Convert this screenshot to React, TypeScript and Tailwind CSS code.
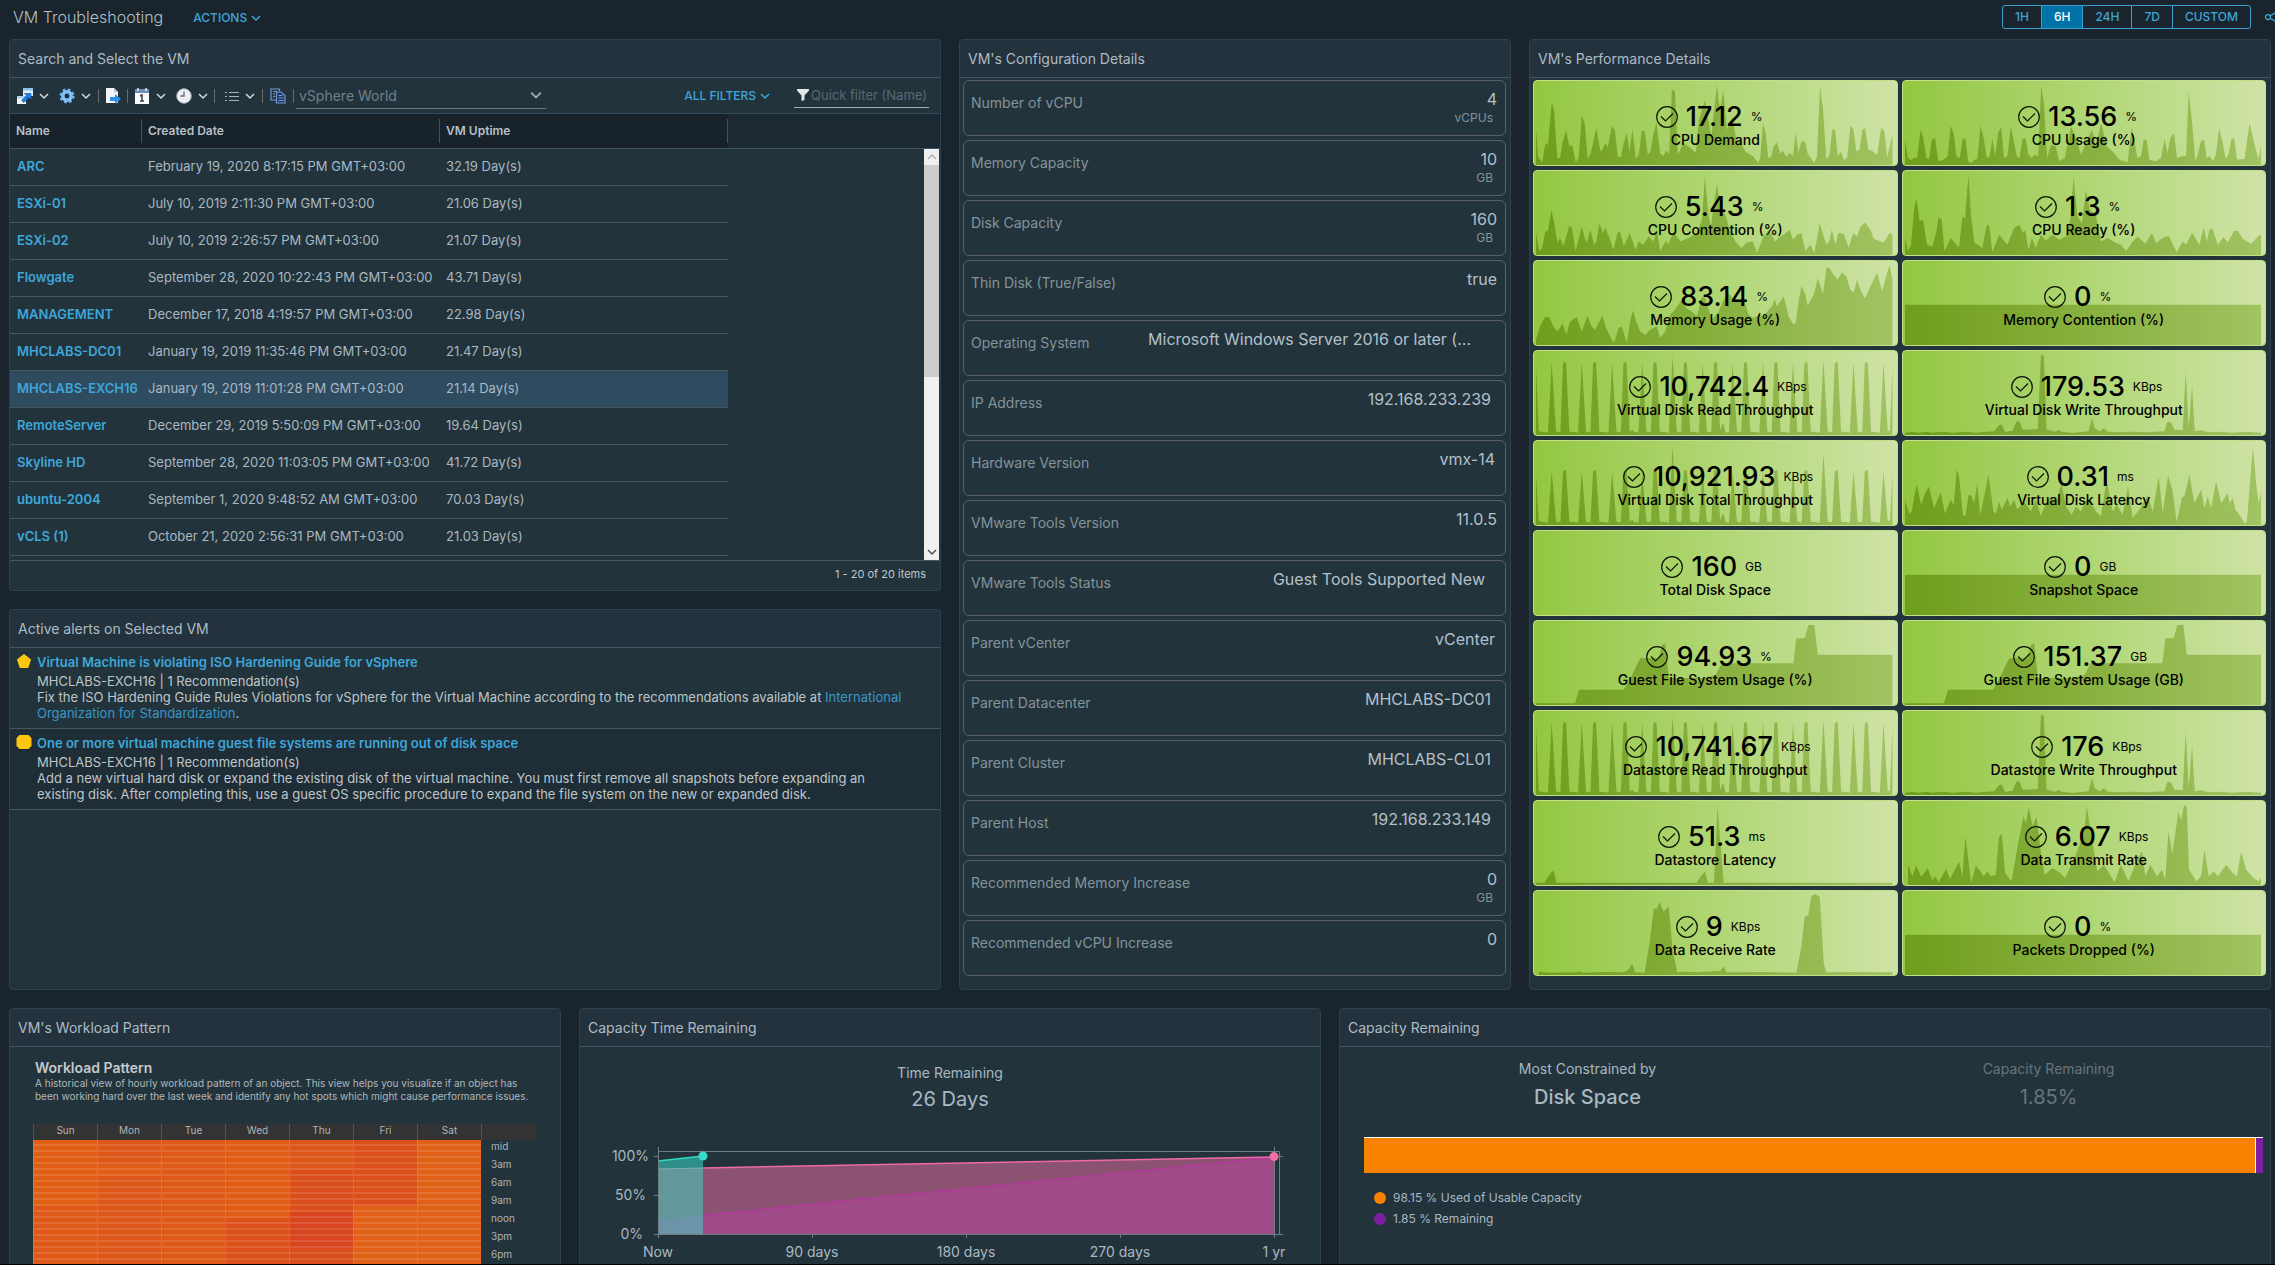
import React from 'react';
import { Share2 } from 'lucide-react';

/* ---------- shared pieces ---------- */

function Chevron({ className = 'size-2.5 text-[#d5dbe0]' }: { className?: string }) {
  return (
    <svg viewBox="0 0 10 10" className={`shrink-0 ${className}`} fill="none" stroke="currentColor" strokeWidth="1.5">
      <path d="M1 3l4 4 4-4" />
    </svg>
  );
}

function Panel({ title, className = '', children }: { title: string; className?: string; children: React.ReactNode }) {
  return (
    <section className={`flex flex-col overflow-hidden rounded border border-[#2f4252] bg-[#22333b] ${className}`}>
      <h2 className="h-[38px] shrink-0 border-b border-[#435664] bg-[#23323c] px-2 pt-px text-[14px] leading-[36px] text-[#adbbc6]">{title}</h2>
      {children}
    </section>
  );
}

/* ---------- toolbar icons ---------- */

const OpenIcon = () => (
  <svg viewBox="0 0 16 16" className="size-4">
    <rect x="6" y="0" width="10" height="8" fill="#dfeefb" />
    <rect x="6" y="0" width="10" height="2.5" fill="#8fc0ee" />
    <rect x="0" y="8" width="9" height="8" fill="#f2f8fe" />
    <rect x="0" y="8" width="9" height="2.5" fill="#a8cdf2" />
    <path d="M4.5 12.5l5-5-2-2H14v6l-2-2-5 5z" fill="#1f7fe0" stroke="#0f4f9e" strokeWidth=".6" />
  </svg>
);
const GearIcon = () => (
  <svg viewBox="0 0 16 16" className="size-4">
    <circle cx="8" cy="8" r="6.3" fill="none" stroke="#6db4f5" strokeWidth="2.6" strokeDasharray="2.6 2.35" />
    <circle cx="8" cy="8" r="4.2" fill="none" stroke="#7fc0fa" strokeWidth="3.6" />
    <circle cx="8" cy="8" r="2.3" fill="#22333b" />
  </svg>
);
const ExportIcon = () => (
  <svg viewBox="0 0 16 16" className="size-4">
    <path d="M1 0h8l4 4v11H1z" fill="#f1f5f8" />
    <path d="M9 0l4 4H9z" fill="#b9c6d2" />
    <path d="M5 9h5V6l6 5-6 5v-3H5z" fill="#2d8eea" />
  </svg>
);
const CalendarIcon = () => (
  <svg viewBox="0 0 16 16" className="size-4">
    <rect x="1" y="1" width="14" height="15" fill="#fbfcfd" />
    <rect x="1" y="1" width="14" height="4" fill="#6e8fb8" />
    <path d="M4 0v3M12 0v3" stroke="#dfe8f2" strokeWidth="1.5" />
    <path d="M6 8l2-1v6M6 13h4" fill="none" stroke="#39424c" strokeWidth="1.5" />
  </svg>
);
const ClockIcon = () => (
  <svg viewBox="0 0 16 16" className="size-4">
    <circle cx="8" cy="8" r="7.2" fill="#eef0f2" stroke="#b8c4d0" />
    <path d="M8 3.5V8H4.5" fill="none" stroke="#5e6b78" strokeWidth="1.3" />
  </svg>
);
const ListIcon = () => (
  <svg viewBox="0 0 14 14" className="size-3.5" stroke="#a9b0b5" strokeWidth="1.1">
    <path d="M4 3.5h10M4 7.5h10M4 11.5h10M0 3.5h2M0 7.5h2M0 11.5h2" />
  </svg>
);
const CopyIcon = () => (
  <svg viewBox="0 0 16 16" className="size-4" fill="none" stroke="#6f97dd" strokeWidth="1.2">
    <path d="M9.5 12H1V1h8.5v2" />
    <path d="M6.5 4H11l4 3.5V15H6.5z" fill="#23395a" />
    <path d="M3 3.5h4M3 6h2M3 8.500h2M8.500 7.500h4M8.500 10h5M8.500 12.500h5" />
  </svg>
);

const Divider = () => <span className="h-3.5 w-px bg-[#6a6a6a]" />;

function IconButton({ label, menu, children }: { label: string; menu?: boolean; children: React.ReactNode }) {
  return (
    <button type="button" aria-label={label} className="flex items-center gap-1.5">
      {children}
      {menu && <Chevron />}
    </button>
  );
}

/* ---------- VM list ---------- */

const vms: [string, string, string][] = [
  ['ARC', 'February 19, 2020 8:17:15 PM GMT+03:00', '32.19 Day(s)'],
  ['ESXi-01', 'July 10, 2019 2:11:30 PM GMT+03:00', '21.06 Day(s)'],
  ['ESXi-02', 'July 10, 2019 2:26:57 PM GMT+03:00', '21.07 Day(s)'],
  ['Flowgate', 'September 28, 2020 10:22:43 PM GMT+03:00', '43.71 Day(s)'],
  ['MANAGEMENT', 'December 17, 2018 4:19:57 PM GMT+03:00', '22.98 Day(s)'],
  ['MHCLABS-DC01', 'January 19, 2019 11:35:46 PM GMT+03:00', '21.47 Day(s)'],
  ['MHCLABS-EXCH16', 'January 19, 2019 11:01:28 PM GMT+03:00', '21.14 Day(s)'],
  ['RemoteServer', 'December 29, 2019 5:50:09 PM GMT+03:00', '19.64 Day(s)'],
  ['Skyline HD', 'September 28, 2020 11:03:05 PM GMT+03:00', '41.72 Day(s)'],
  ['ubuntu-2004', 'September 1, 2020 9:48:52 AM GMT+03:00', '70.03 Day(s)'],
  ['vCLS (1)', 'October 21, 2020 2:56:31 PM GMT+03:00', '21.03 Day(s)'],
];

function VmSearch() {
  return (
    <Panel title="Search and Select the VM">
      <div className="flex h-9 items-center border-b border-[#33485a] pl-[7px] pr-[11px]">
        <div className="flex items-center gap-2.5">
          <IconButton label="Open in" menu><OpenIcon /></IconButton>
          <IconButton label="Settings" menu><GearIcon /></IconButton>
        </div>
        <div className="ml-[7px] flex items-center gap-1.5">
          <Divider />
          <IconButton label="Export"><ExportIcon /></IconButton>
          <Divider />
          <div className="flex items-center gap-2.5">
            <IconButton label="Date range" menu><CalendarIcon /></IconButton>
            <IconButton label="Time" menu><ClockIcon /></IconButton>
          </div>
          <Divider />
        </div>
        <div className="ml-2.5 flex items-center gap-[7px]">
          <IconButton label="List" menu><ListIcon /></IconButton>
          <Divider />
          <IconButton label="Copy"><CopyIcon /></IconButton>
          <Divider />
        </div>
        <div className="relative ml-0.5 w-[250px] border-b border-[#6b7a82]">
          <select aria-label="Scope" className="h-6 w-full appearance-none bg-transparent pl-[3px] text-[14px] leading-6 text-[#70808a] outline-none">
            <option>vSphere World</option>
          </select>
          <Chevron className="pointer-events-none absolute right-1 top-1.5 size-3 text-[#a3adb3]" />
        </div>
        <button type="button" className="ml-auto flex items-center gap-1 text-[12px] font-medium text-[#3ea6d8]">
          ALL FILTERS <Chevron className="size-2.5 text-[#3ea6d8]" />
        </button>
        <label className="ml-6 flex w-[135px] items-center gap-0.5 border-b border-[#a3adb3] pl-[3px]">
          <svg viewBox="0 0 12 12" className="size-3 shrink-0" fill="#e2e6e8"><path d="M0 0h12v1.500L7.500 6.500V11L4.500 12V6.500L0 1.500z" /></svg>
          <input aria-label="Quick filter (Name)" placeholder="Quick filter (Name)" className="h-6 w-full min-w-0 bg-transparent text-[13px] outline-none placeholder:text-[#586972]" />
        </label>
      </div>
      <div className="relative h-[446px] overflow-hidden">
        <table className="w-full table-fixed border-separate border-spacing-0 text-left text-[13px] text-[#a9b8c2]">
          <colgroup>
            <col className="w-[132px]" />
            <col className="w-[298px]" />
            <col className="w-[288px]" />
            <col />
          </colgroup>
          <thead>
            <tr className="h-[35px] bg-[#18222a] text-[12px] text-[#b5c0c8]">
              {['Name', 'Created Date', 'VM Uptime'].map((h) => (
                <th key={h} scope="col" className="border-b border-[#3f525f] p-0 font-semibold">
                  <div className="h-6 border-r border-[#3f525f] pl-1.5 leading-6">{h}</div>
                </th>
              ))}
              <td className="border-b border-[#3f525f] bg-[#1d2932]" />
            </tr>
          </thead>
          <tbody>
            {vms.map(([name, created, uptime]) => (
              <tr key={name} className={name === 'MHCLABS-EXCH16' ? 'h-[37px] bg-[#2f4b5f]' : 'h-[37px]'}>
                <td className="border-b border-[#46575f] p-0 pl-[7px] font-semibold">
                  <a href="#vm" className="text-[#3ea6d8]">{name}</a>
                </td>
                <td className="whitespace-nowrap border-b border-[#46575f] p-0 pl-1.5">{created}</td>
                <td className="border-b border-[#46575f] p-0 pl-1.5">{uptime}</td>
                <td className="bg-[#22333b] p-0" />
              </tr>
            ))}
          </tbody>
        </table>
        <div className="absolute bottom-0 right-px top-[35px] flex w-[15px] flex-col items-center bg-[#f0f0f0]">
          <Chevron className="my-[3px] size-2.5 rotate-180 text-[#b0b0b0]" />
          <div className="h-[212px] w-full bg-[#cdcdcd]" />
          <Chevron className="mb-[3px] mt-auto size-2.5 text-[#505050]" />
        </div>
      </div>
      <div className="h-[30px] border-t border-[#46575f] pr-3.5 text-right text-[11px] leading-[26px] text-[#c0c9cf]">1 - 20 of 20 items</div>
    </Panel>
  );
}

/* ---------- alerts ---------- */

function Alert({ title, icon, className = '', children }: { title: string; icon: React.ReactNode; className?: string; children: React.ReactNode }) {
  return (
    <article className={`flex gap-[5px] border-b border-[#46575f] pb-[7px] pl-1.5 pr-5 pt-[5px] text-[13px] leading-4 text-[#bec6ca] ${className}`}>
      <svg viewBox="0 0 16 16" className="size-4 shrink-0">{icon}</svg>
      <div>
        <h3 className="mb-0.5 font-semibold leading-[18px]"><a href="#alert" className="text-[#3ea6d8]">{title}</a></h3>
        <p>MHCLABS-EXCH16 | 1 Recommendation(s)</p>
        <p className="pr-2">{children}</p>
      </div>
    </article>
  );
}

function Alerts() {
  return (
    <Panel title="Active alerts on Selected VM" className="grow">
      <Alert
        title="Virtual Machine is violating ISO Hardening Guide for vSphere"
        icon={<path d="M8 1.500l6.500 5L12 14.500H4L1.500 6.500z" fill="#fdc70f" stroke="#fdc70f" strokeLinejoin="round" />}
      >
        Fix the ISO Hardening Guide Rules Violations for vSphere for the Virtual Machine according to the recommendations available at{' '}
        <a href="#iso" className="text-[#3a97c9]">International Organization for Standardization</a>.
      </Alert>
      <Alert
        title="One or more virtual machine guest file systems are running out of disk space"
        icon={<path d="M3.500 1h9L15.500 4v8l-3 3h-9l-3-3V4z" fill="#fdc70f" />}
        className="bg-[#1f2d36]"
      >
        Add a new virtual hard disk or expand the existing disk of the virtual machine. You must first remove all snapshots before expanding an
        existing disk. After completing this, use a guest OS specific procedure to expand the file system on the new or expanded disk.
      </Alert>
    </Panel>
  );
}

/* ---------- configuration ---------- */

const config: { label: string; value: string; unit?: string; pad?: string }[] = [
  { label: 'Number of vCPU', value: '4', unit: 'vCPUs' },
  { label: 'Memory Capacity', value: '10', unit: 'GB' },
  { label: 'Disk Capacity', value: '160', unit: 'GB' },
  { label: 'Thin Disk (True/False)', value: 'true' },
  { label: 'Operating System', value: 'Microsoft Windows Server 2016 or later (...', pad: 'pr-[34px]' },
  { label: 'IP Address', value: '192.168.233.239', pad: 'pr-3.5' },
  { label: 'Hardware Version', value: 'vmx-14', pad: 'pr-2.5' },
  { label: 'VMware Tools Version', value: '11.0.5' },
  { label: 'VMware Tools Status', value: 'Guest Tools Supported New', pad: 'pr-5' },
  { label: 'Parent vCenter', value: 'vCenter', pad: 'pr-2.5' },
  { label: 'Parent Datacenter', value: 'MHCLABS-DC01', pad: 'pr-3.5' },
  { label: 'Parent Cluster', value: 'MHCLABS-CL01', pad: 'pr-3.5' },
  { label: 'Parent Host', value: '192.168.233.149', pad: 'pr-3.5' },
  { label: 'Recommended Memory Increase', value: '0', unit: 'GB' },
  { label: 'Recommended vCPU Increase', value: '0' },
];

function Configuration() {
  return (
    <Panel title="VM's Configuration Details" className="col-span-3">
      <dl className="flex flex-col gap-1 pb-[13px] pl-[3px] pr-1 pt-0.5">
        {config.map(({ label, value, unit, pad = 'pr-2' }) => (
          <div key={label} className="flex h-14 justify-between rounded-md border border-[#5b5f62] pl-[7px]">
            <dt className="pt-3 text-[14px] leading-5 text-[#83939c]">{label}</dt>
            <dd className={`pt-2 text-right text-[16px] leading-5 text-[#b3c0ca] ${pad}`}>
              {value}
              {unit && <span className="block pr-1 text-[12px] leading-[18px] text-[#83939c]">{unit}</span>}
            </dd>
          </div>
        ))}
      </dl>
    </Panel>
  );
}

/* ---------- performance tiles ---------- */

const BASE = 256;

/* Evenly spaced throughput bursts: a narrow spike followed by a flat-topped one. */
function bursts(narrow: number, wide: number, tall: Record<number, number>) {
  const pts: string[] = [`18,${narrow + 8}`, '26,245'];
  for (let i = 0; i < 12; i++) {
    const x = Math.round(65 + i * 90.4);
    const top = tall[i] ?? narrow;
    pts.push(`${x - 24},247`, `${x - 11},249`, `${x},${top}`, `${x + 13},246`);
    if (i < 11) pts.push(`${x + 26},248`, `${x + 34},${wide + 3}`, `${x + 43},${wide}`, `${x + 53},246`);
    if (i === 2) pts.push('307,240');
    if (i === 5) pts.push('568,246', '578,218', '586,246');
  }
  pts.push('1078,240', `1086,${narrow + 8}`);
  return pts.join(' ');
}

const flat = '18,135 1086,135';
const diskRead = bursts(38, 36, { 4: 18, 9: 28 });
const diskTotal = bursts(95, 90, { 4: 18, 9: 40 });
const diskWrite =
  '18,250 40,246 60,249 80,246 100,249 130,246 160,249 200,246 230,249 260,246 285,245 300,226 308,225 318,247 340,243 352,215 362,216 370,240 416,238 425,15 434,17 442,240 470,246 478,240 486,246 520,249 568,245 578,205 586,235 600,245 614,236 625,246 660,248 700,246 740,248 795,245 804,216 814,217 825,240 850,242 859,65 868,235 878,108 886,245 905,242 925,248 960,246 1000,249 1040,246 1086,249';
const guestFs =
  '18,251 135,251 147,210 281,210 299,180 330,115 385,115 396,75 405,70 416,175 520,175 556,165 575,130 789,130 798,55 823,55 834,15 852,15 862,105 1086,105';

const metrics: { value: string; unit: string; label: string; points: string }[] = [
  { value: '17.12', unit: '%', label: 'CPU Demand', points: '18,145 24,230 36,250 46,192 54,195 65,68 72,90 82,235 90,234 98,185 108,152 118,200 126,195 137,248 146,235 155,108 164,130 173,238 182,220 199,145 211,215 220,205 226,188 233,204 245,140 254,150 263,230 272,233 281,190 290,158 298,215 307,148 317,238 326,225 335,152 344,155 353,225 361,215 370,160 379,128 390,222 400,228 408,212 417,222 425,30 434,32 443,225 460,190 480,205 497,218 506,120 524,62 533,110 543,170 560,15 569,90 579,32 590,150 606,110 618,180 630,185 645,215 660,225 668,230 684,250 690,235 698,130 706,160 714,235 722,232 730,200 740,188 750,222 758,212 768,232 778,218 788,230 796,158 804,218 813,185 824,186 832,222 852,250 860,230 869,18 878,90 888,240 897,225 906,148 914,150 922,228 931,215 940,240 950,235 960,138 969,150 978,215 987,210 996,148 1004,146 1014,210 1024,212 1040,226 1052,142 1062,155 1070,232 1086,165' },
  { value: '13.56', unit: '%', label: 'CPU Usage (%)', points: '18,180 27,235 36,242 45,234 54,235 65,150 73,175 82,236 90,238 98,180 108,175 118,245 130,242 146,230 155,138 164,160 172,230 182,236 190,180 199,175 207,245 217,250 226,240 235,238 244,138 254,175 262,230 270,235 280,178 288,230 297,158 306,142 315,235 325,228 335,140 344,185 353,230 361,235 370,178 379,175 388,225 397,235 407,225 417,230 426,18 434,70 444,235 455,195 470,200 480,245 497,235 515,140 533,180 545,225 560,190 578,150 590,195 606,130 622,200 640,215 660,240 685,248 697,142 705,180 714,236 725,228 733,180 742,180 750,240 770,245 785,235 796,178 804,220 813,175 824,160 833,235 850,228 860,230 868,32 880,150 888,245 896,220 904,185 914,180 922,235 930,230 942,245 950,220 959,145 970,190 978,236 987,225 996,178 1004,175 1013,240 1035,238 1050,130 1062,180 1076,238 1080,225 1086,185' },
  { value: '5.43', unit: '%', label: 'CPU Contention (%)', points: '18,190 28,245 36,235 46,185 54,182 64,120 74,165 82,220 90,205 100,230 118,168 126,175 137,245 155,170 164,205 170,220 181,180 192,225 199,215 208,160 218,190 226,175 240,210 250,240 262,190 270,185 281,230 299,190 316,240 326,215 340,225 355,200 370,215 380,180 390,245 408,212 414,225 430,185 450,215 475,205 500,190 515,150 524,20 534,130 542,170 560,42 570,110 585,135 600,185 615,215 633,235 650,218 668,215 680,250 700,200 716,180 735,215 745,205 760,195 778,180 788,210 800,195 813,190 825,245 840,225 852,250 868,160 880,200 888,225 897,215 904,180 915,225 924,190 940,192 955,235 968,190 980,200 990,170 1004,158 1020,180 1030,208 1060,218 1078,188 1086,195' },
  { value: '1.3', unit: '%', label: 'CPU Ready (%)', points: '18,205 27,245 36,225 46,110 53,88 62,155 72,148 84,225 100,230 112,185 118,142 128,150 136,245 155,205 172,225 180,232 190,140 198,145 208,15 216,140 226,220 236,225 250,235 262,168 270,165 280,248 300,195 325,225 345,175 360,165 372,190 378,180 388,240 398,205 410,235 425,195 440,212 460,195 480,210 500,200 513,150 523,20 535,140 548,160 560,60 572,120 590,135 605,215 625,205 650,220 665,225 680,245 700,215 715,200 738,222 758,190 770,220 790,205 808,198 832,248 850,215 860,225 878,188 900,225 913,172 922,215 930,180 940,178 955,225 972,202 985,218 1003,185 1015,182 1030,208 1055,222 1080,195 1086,196' },
  { value: '83.14', unit: '%', label: 'Memory Usage (%)', points: '18,240 30,200 45,172 58,172 70,200 82,215 98,192 109,225 120,185 140,172 155,215 172,168 185,200 195,210 217,168 228,205 240,230 250,248 255,240 265,205 275,200 290,250 300,185 308,152 320,190 330,215 345,225 360,210 380,200 390,235 405,215 420,165 432,152 445,135 455,118 468,145 485,155 500,170 515,110 525,115 545,180 565,155 580,120 595,100 610,120 625,125 640,112 655,165 670,175 685,165 700,170 715,150 725,140 733,118 740,140 760,110 775,170 790,196 797,185 805,120 814,78 825,105 832,138 850,105 862,55 878,102 888,25 895,22 910,45 922,58 935,38 948,50 960,90 970,98 980,60 990,90 1003,116 1020,80 1040,38 1055,95 1065,55 1077,15 1086,60' },
  { value: '0', unit: '%', label: 'Memory Contention (%)', points: flat },
  { value: '10,742.4', unit: 'KBps', label: 'Virtual Disk Read Throughput', points: diskRead },
  { value: '179.53', unit: 'KBps', label: 'Virtual Disk Write Throughput', points: diskWrite },
  { value: '10,921.93', unit: 'KBps', label: 'Virtual Disk Total Throughput', points: diskTotal },
  { value: '0.31', unit: 'ms', label: 'Virtual Disk Latency', points: '18,180 30,222 38,215 53,132 66,195 78,160 90,140 105,205 125,158 138,222 155,180 164,195 173,88 180,110 192,230 200,225 208,165 217,168 225,190 235,130 243,228 255,170 268,105 283,215 290,222 300,185 308,210 325,175 333,200 345,180 355,210 375,185 395,215 410,180 425,230 440,190 455,170 470,190 487,130 500,200 517,225 530,200 545,215 560,180 575,190 590,215 605,230 622,120 640,215 652,195 670,225 686,140 700,235 720,210 745,165 760,215 778,110 790,220 806,108 820,155 832,248 848,172 855,170 870,105 885,190 905,150 915,205 925,170 935,205 950,125 965,190 985,160 990,190 1000,175 1008,210 1020,225 1035,250 1042,248 1060,20 1072,150 1078,190 1086,150' },
  { value: '160', unit: 'GB', label: 'Total Disk Space', points: '' },
  { value: '0', unit: 'GB', label: 'Snapshot Space', points: flat },
  { value: '94.93', unit: '%', label: 'Guest File System Usage (%)', points: guestFs },
  { value: '151.37', unit: 'GB', label: 'Guest File System Usage (GB)', points: guestFs },
  { value: '10,741.67', unit: 'KBps', label: 'Datastore Read Throughput', points: diskRead },
  { value: '176', unit: 'KBps', label: 'Datastore Write Throughput', points: diskWrite },
  { value: '51.3', unit: 'ms', label: 'Datastore Latency', points: '18,249 43,249 62,220 70,212 80,249 499,249 512,228 525,215 533,249 551,249 562,20 571,140 580,249 1086,249' },
  { value: '6.07', unit: 'KBps', label: 'Data Transmit Rate', points: '27,195 40,230 52,198 67,232 86,205 100,242 109,230 119,248 141,208 153,238 180,185 190,230 199,110 216,250 230,198 245,215 253,230 265,215 275,230 290,225 299,112 308,102 318,220 337,245 357,130 373,50 380,70 389,22 400,80 412,50 424,150 436,225 460,205 483,220 498,235 528,170 554,100 563,20 575,100 594,215 614,195 646,248 664,195 688,245 713,180 728,155 738,230 753,195 773,230 788,210 798,240 807,95 819,160 837,35 845,60 854,15 862,20 869,210 891,245 905,230 915,150 928,230 943,215 955,230 980,195 1000,220 1012,230 1025,155 1040,210 1062,235 1077,245 1086,230' },
  { value: '9', unit: 'KBps', label: 'Data Receive Rate', points: '27,247 60,249 140,248 150,246 160,249 230,247 280,248 293,242 306,222 315,248 343,249 358,160 371,55 379,58 388,37 400,65 416,50 427,180 441,248 460,246 500,248 571,243 580,230 588,248 700,247 798,249 813,170 823,80 834,75 842,20 852,12 868,20 880,220 887,248 960,247 1086,248' },
  { value: '0', unit: '%', label: 'Packets Dropped (%)', points: flat },
];

function MetricTile({ value, unit, label, points }: { value: string; unit: string; label: string; points: string }) {
  const first = points.split(',')[0];
  return (
    <div className="relative h-[86px] overflow-hidden rounded-sm border border-[#c3df88] bg-linear-to-r from-[#93c73f] via-[#afd673] to-[#d0e3a6] pt-[21px] text-black">
      {points && (
        <svg viewBox={`18 3 1068 ${BASE - 3}`} preserveAspectRatio="none" className="absolute bottom-0 left-0.5 h-[84px] w-[calc(100%-6px)]" aria-hidden="true">
          <defs>
            <linearGradient id="area" gradientUnits="userSpaceOnUse" x1="18" y1="0" x2="1086" y2="0">
              <stop offset="0" stopColor="#6e9e1c" />
              <stop offset=".5" stopColor="#87b03e" />
              <stop offset="1" stopColor="#a1c362" />
            </linearGradient>
          </defs>
          <polygon points={`${first},${BASE} ${points} 1086,${BASE}`} fill="url(#area)" />
        </svg>
      )}
      <div className="relative flex h-[30px] items-center justify-center gap-2">
        <svg viewBox="0 0 22 22" className="size-[22px]" fill="none" stroke="#101608" strokeWidth="1.2">
          <circle cx="11" cy="11" r="10.300" />
          <path d="M5 10.500l4.500 4.500L17 7.500" />
        </svg>
        <span className="text-[27px] font-medium leading-[30px]">{value}</span>
        <span className="w-6 whitespace-nowrap text-[12px]">{unit}</span>
      </div>
      <div className="relative text-center text-[14px] font-medium leading-4">{label}</div>
    </div>
  );
}

function Performance() {
  return (
    <Panel title="VM's Performance Details" className="col-span-4">
      <div className="grid grid-cols-2 gap-1 pb-[13px] pl-[3px] pr-1 pt-0.5">
        {metrics.map((m) => <MetricTile key={m.label} {...m} />)}
      </div>
    </Panel>
  );
}

/* ---------- workload pattern ---------- */

const days = ['Sun', 'Mon', 'Tue', 'Wed', 'Thu', 'Fri', 'Sat'];
const hours = ['mid', '3am', '6am', '9am', 'noon', '3pm', '6pm'];

function heat(day: string, hour: number) {
  if (day === 'Thu') return hour >= 12 && hour < 18 ? 'bg-[#d8441e]' : hour < 5 ? 'bg-[#dc561a]' : 'bg-[#db4e1b]';
  if (day === 'Fri') return hour < 11 ? 'bg-[#db4f1b]' : 'bg-[#e06017]';
  if (day === 'Wed') return hour < 13 ? 'bg-[#df5c17]' : 'bg-[#dc5019]';
  if (day === 'Mon') return hour >= 4 && hour < 6 ? 'bg-[#e05e15]' : 'bg-[#dd5719]';
  if (day === 'Sat') return 'bg-[#df6016]';
  if (day === 'Sun') return hour < 11 ? 'bg-[#e05f15]' : 'bg-[#de5818]';
  return 'bg-[#de5917]';
}

function Workload() {
  return (
    <Panel title="VM's Workload Pattern" className="col-span-3">
      <div className="px-[23px] pb-5 pt-3">
        <h3 className="pl-0.5 text-[14px] font-semibold leading-[18px] text-[#c3c9cc]">Workload Pattern</h3>
        <p className="pl-0.5 text-[10px] leading-[13px] text-[#b0b8bc]">
          A historical view of hourly workload pattern of an object. This view helps you visualize if an object has
          <br />
          been working hard over the last week and identify any hot spots which might cause performance issues.
        </p>
        <table className="mt-[21px] w-full table-fixed border-separate border-spacing-0 text-[10px] text-[#b0b4b6]">
          <thead>
            <tr className="h-4 bg-[#333333]">
              {days.map((d) => <th key={d} scope="col" className="border-l border-[#4b5457] p-0 pb-1 font-normal leading-3">{d}</th>)}
              <td className="w-14 border-l border-[#4b5457] p-0" />
            </tr>
          </thead>
          <tbody>
            {Array.from({ length: hours.length * 3 }, (_, hour) => (
              <tr key={hour} className="h-1.5">
                {days.map((d) => <td key={d} className={`border-b-2 border-l border-b-white/12 border-l-white/15 p-0 ${heat(d, hour)}`} />)}
                {hour % 3 === 0 && <th scope="row" rowSpan={3} className="h-[18px] p-0 pl-2.5 text-left align-top font-normal leading-3">{hours[hour / 3]}</th>}
              </tr>
            ))}
          </tbody>
        </table>
      </div>
    </Panel>
  );
}

/* ---------- capacity ---------- */

function TimeRemaining() {
  return (
    <Panel title="Capacity Time Remaining" className="col-span-4">
      <div className="pt-4 text-center text-[#a9b8c2]">
        <div className="text-[14px] leading-5">Time Remaining</div>
        <div className="mt-0.5 text-[20px] leading-7">26 Days</div>
      </div>
      <svg viewBox="0 0 740 125" className="mt-[27px] w-full" fontSize="14" fill="#a9b8c2" role="img" aria-label="Projected capacity over one year">
        <polygon points="78,29 694,17 694,94 78,94" fill="#8b5272" />
        <polygon points="78,80 694,17 694,94 78,94" fill="#a04a88" />
        <path d="M78 80L694 17" stroke="#b03a9a" strokeWidth="1.500" />
        <polygon points="78,21 123,16 123,94 78,94" fill="#2f8f88" />
        <polygon points="78,29 123,28 123,94 78,94" fill="#62989b" />
        <polygon points="78,80 123,75 123,94 78,94" fill="#6c94a9" />
        <path d="M78 29L123 28" stroke="#7fb0b0" />
        <path d="M123 28L694 17" stroke="#f06aa6" strokeWidth="1.500" />
        <path d="M78 21L123 16" stroke="#2fd9c4" strokeWidth="1.500" />
        <path d="M78.500 7V98M74 94.500H703M74 16.500H78M74 55.500H78M78 11.500H699.500V94M694.500 7V98M694 16.500H703M232.500 94V98M386.500 94V98M540.500 94V98" fill="none" stroke="#6f7d84" />
        <circle cx="123" cy="16" r="4.500" fill="#35dcca" />
        <circle cx="694" cy="16.500" r="4.500" fill="#f26fa4" />
        <g textAnchor="end">
          <text x="69" y="21">100%</text>
          <text x="66" y="60">50%</text>
          <text x="63" y="99">0%</text>
        </g>
        <g textAnchor="middle">
          <text x="78" y="117">Now</text>
          <text x="232" y="117">90 days</text>
          <text x="386" y="117">180 days</text>
          <text x="540" y="117">270 days</text>
          <text x="694" y="117">1 yr</text>
        </g>
      </svg>
    </Panel>
  );
}

function CapacityRemaining() {
  return (
    <Panel title="Capacity Remaining" className="col-span-5">
      <div className="grid grid-cols-2 pl-5 pt-3 text-center">
        <div className="text-[#a9b8c2]">
          <div className="text-[14px] leading-5">Most Constrained by</div>
          <div className="mt-1 text-[20px] font-medium leading-7">Disk Space</div>
        </div>
        <div className="pl-3 text-[#69757b]">
          <div className="text-[14px] leading-5">Capacity Remaining</div>
          <div className="mt-1 text-[20px] leading-7">1.85%</div>
        </div>
      </div>
      <div className="ml-6 mr-[7px] mt-[26px] flex h-9 border-t border-white">
        <div className="grow bg-[#f98300]" />
        <div className="w-2 border-l border-white bg-[#7a1fa0]" />
      </div>
      <ul className="ml-[34px] mt-3.5 text-[12px] leading-[21px] text-[#a9b8c2]">
        <li className="flex items-center gap-[7px]"><span className="size-3 rounded-full bg-[#fa8200]" />98.15 % Used of Usable Capacity</li>
        <li className="flex items-center gap-[7px]"><span className="size-3 rounded-full bg-[#7a1fa0]" />1.85 % Remaining</li>
      </ul>
    </Panel>
  );
}

/* ---------- page ---------- */

const ranges = ['1H', '6H', '24H', '7D', 'CUSTOM'];

export default function App() {
  return (
    <main className="h-screen overflow-hidden border-b border-black bg-[#19242c] pl-[9px] pr-1 font-['Inter',sans-serif]">
      <header className="-mr-1 flex h-[39px] items-start overflow-hidden pl-1">
        <h1 className="pt-1.5 text-[16px] font-light leading-[22px] text-[#b4c0c8]">VM Troubleshooting</h1>
        <button type="button" className="ml-[30px] mt-2 flex items-center gap-1 text-[12px] font-medium leading-5 text-[#3ea6d8]">
          ACTIONS <Chevron className="size-2.5 text-[#3ea6d8]" />
        </button>
        <div className="ml-auto mt-[5px] flex h-6 shrink-0 divide-x divide-[#3a9fcc] overflow-hidden rounded-[3px] border border-[#3a9fcc] text-[12px] font-medium">
          {ranges.map((r) => (
            <button key={r} type="button" className={r === '6H' ? 'bg-[#0072a8] px-3 text-white' : 'px-3 text-[#3ea6d8]'}>{r}</button>
          ))}
        </div>
        <button type="button" aria-label="Share" className="-mr-2 ml-3 mt-[7px] shrink-0 text-[#3ea6d8]">
          <Share2 className="size-5" strokeWidth={1.5} />
        </button>
      </header>
      <div className="grid grid-cols-12 gap-[18px]">
        <div className="col-span-5 flex flex-col gap-[18px]">
          <VmSearch />
          <Alerts />
        </div>
        <Configuration />
        <Performance />
        <Workload />
        <TimeRemaining />
        <CapacityRemaining />
      </div>
    </main>
  );
}
